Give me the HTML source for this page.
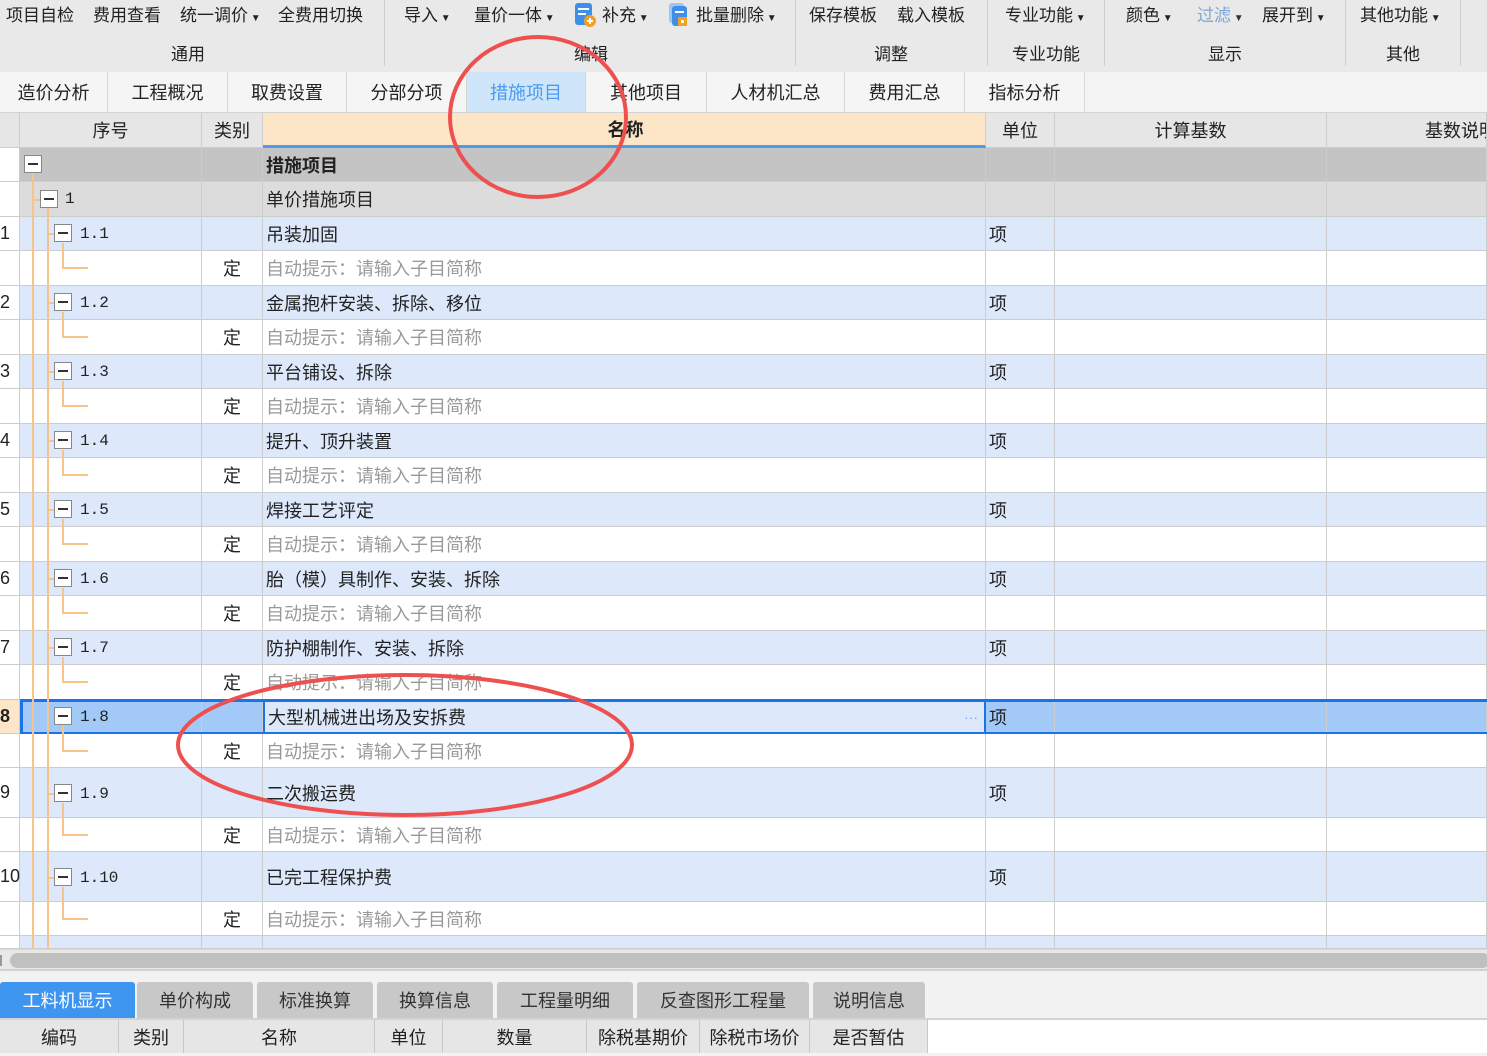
<!DOCTYPE html>
<html><head><meta charset="utf-8"><style>
*{margin:0;padding:0;box-sizing:border-box}
body{width:1487px;height:1053px;overflow:hidden;background:#f2f2f2;font-family:"Liberation Sans","Noto Sans CJK SC",sans-serif;color:#222;position:relative}
.a{position:absolute;white-space:nowrap}
.tb{left:0;top:0;width:1487px;height:72px;background:#e9e9e9}
.t1{font-size:17px;top:1px}
.t2{font-size:17px;top:40px}
.sep{position:absolute;top:0;width:1px;height:66px;background:#cfcfcf}
.tabs{left:0;top:72px;width:1487px;height:41px;background:#f3f3f3;border-bottom:1px solid #d4d4d4}
.tab{position:absolute;top:0;height:40px;line-height:42px;text-align:center;font-size:18px;border-right:1px solid #d6d6d6;background:#f5f5f5}
.row{position:absolute;left:0;width:1487px}
.row>div{position:absolute;top:0;height:100%;border-right:1px solid #cdcdcd;border-bottom:1px solid #cdcdcd;font-size:18px;white-space:nowrap;overflow:hidden;display:flex;align-items:center}
.c0{left:0;width:20px;background:#fff}
.c1{left:20px;width:182px}
.c2{left:202px;width:61px;justify-content:center}
.c3{left:263px;width:723px;padding-left:3px}
.c4{left:986px;width:69px;padding-left:3px}
.c5{left:1055px;width:272px}
.c6{left:1327px;width:160px}
.b>div{background:#dde9fb}
.w>div{background:#fff}
.b>.c0,.w>.c0{background:#fff}
.hint{color:#999}
.box{position:absolute;width:18px;height:18px;border:1px solid #888;background:#fff}
.box:after{content:"";position:absolute;left:3px;top:7px;width:10px;height:2px;background:#333}
.num{position:absolute;font-size:16px;font-family:"Liberation Mono","DejaVu Sans Mono",monospace}
.ov{position:absolute;background:#f6c38a}
.btab{position:absolute;top:982px;height:36px;line-height:38px;text-align:center;font-size:18px;background:#c8c8c8;color:#333;border-radius:3px 3px 0 0}
.bh{position:absolute;top:1020px;height:33px;line-height:36px;text-align:center;font-size:18px;background:#e6e6e6;border-right:1px solid #c8c8c8}
</style></head><body>

<div class="a tb"></div>
<div class="a t1" style="left:6px">项目自检</div>
<div class="a t1" style="left:93px">费用查看</div>
<div class="a t1" style="left:180px">统一调价<span style="font-size:10px"> ▼</span></div>
<div class="a t1" style="left:278px">全费用切换</div>
<div class="a t1" style="left:404px">导入<span style="font-size:10px"> ▼</span></div>
<div class="a t1" style="left:474px">量价一体<span style="font-size:10px"> ▼</span></div>
<svg class="a" style="left:574px;top:2px" width="24" height="26"><rect x="1" y="1" width="17" height="22" rx="3" fill="#3f8fe8"/><rect x="4" y="6" width="11" height="2" fill="#fff"/><rect x="4" y="11" width="8" height="2" fill="#fff"/><circle cx="16" cy="19" r="6" fill="#f5a020"/><path d="M13 19h6M16 16v6" stroke="#fff" stroke-width="2"/></svg>
<div class="a t1" style="left:602px">补充<span style="font-size:10px"> ▼</span></div>
<svg class="a" style="left:668px;top:2px" width="24" height="26"><rect x="1" y="1" width="15" height="20" rx="3" fill="#9cc6f3"/><rect x="4" y="4" width="15" height="20" rx="3" fill="#3f8fe8"/><rect x="7" y="9" width="9" height="2" fill="#fff"/><rect x="10" y="15" width="9" height="9" rx="1" fill="#f5a020"/><rect x="13" y="18" width="3" height="3" fill="#fff"/></svg>
<div class="a t1" style="left:696px">批量删除<span style="font-size:10px"> ▼</span></div>
<div class="a t1" style="left:809px">保存模板</div>
<div class="a t1" style="left:897px">载入模板</div>
<div class="a t1" style="left:1005px">专业功能<span style="font-size:10px"> ▼</span></div>
<div class="a t1" style="left:1126px">颜色<span style="font-size:10px"> ▼</span></div>
<div class="a t1" style="left:1197px;color:#7fa6d8">过滤<span style="font-size:10px;color:#333"> ▼</span></div>
<div class="a t1" style="left:1262px">展开到<span style="font-size:10px"> ▼</span></div>
<div class="a t1" style="left:1360px">其他功能<span style="font-size:10px"> ▼</span></div>
<div class="a t2" style="left:171px">通用</div>
<div class="a t2" style="left:574px">编辑</div>
<div class="a t2" style="left:874px">调整</div>
<div class="a t2" style="left:1012px">专业功能</div>
<div class="a t2" style="left:1208px">显示</div>
<div class="a t2" style="left:1386px">其他</div>
<div class="sep" style="left:384px"></div><div class="sep" style="left:795px"></div><div class="sep" style="left:987px"></div><div class="sep" style="left:1104px"></div><div class="sep" style="left:1345px"></div><div class="sep" style="left:1460px"></div>

<div class="a tabs"></div>
<div class="tab" style="left:0;top:72px;width:108px">造价分析</div>
<div class="tab" style="left:108px;top:72px;width:120px">工程概况</div>
<div class="tab" style="left:228px;top:72px;width:119px">取费设置</div>
<div class="tab" style="left:347px;top:72px;width:120px">分部分项</div>
<div class="tab" style="left:467px;top:72px;width:119px;background:#cfe5fa;color:#4a9bf0">措施项目</div>
<div class="tab" style="left:586px;top:72px;width:121px">其他项目</div>
<div class="tab" style="left:707px;top:72px;width:138px">人材机汇总</div>
<div class="tab" style="left:845px;top:72px;width:120px">费用汇总</div>
<div class="tab" style="left:965px;top:72px;width:120px">指标分析</div>

<div class="row" style="top:113px;height:35px">
<div class="c0" style="background:#e6e6e6"></div>
<div class="c1" style="background:#e6e6e6;justify-content:center">序号</div>
<div class="c2" style="background:#e6e6e6">类别</div>
<div class="c3" style="background:#fde6c8;justify-content:center;font-weight:bold;border-bottom:3px solid #4a9bf0">名称</div>
<div class="c4" style="background:#e6e6e6;justify-content:center;padding:0">单位</div>
<div class="c5" style="background:#e6e6e6;justify-content:center">计算基数</div>
<div class="c6" style="background:#e6e6e6;padding-left:98px">基数说明</div>
</div>

<div class="row" style="top:148px;height:34px"><div class="c0"></div><div class="c1" style="background:#c4c4c4"></div><div class="c2" style="background:#c4c4c4"></div><div class="c3" style="background:#c4c4c4;font-weight:bold">措施项目</div><div class="c4" style="background:#c4c4c4"></div><div class="c5" style="background:#c4c4c4"></div><div class="c6" style="background:#c4c4c4"></div></div>
<div class="row" style="top:182px;height:35px"><div class="c0"></div><div class="c1" style="background:#dcdcdc"></div><div class="c2" style="background:#dcdcdc"></div><div class="c3" style="background:#dcdcdc">单价措施项目</div><div class="c4" style="background:#dcdcdc"></div><div class="c5" style="background:#dcdcdc"></div><div class="c6" style="background:#dcdcdc"></div></div>

<div class="row b" style="top:217px;height:34px"><div class="c0">1</div><div class="c1"></div><div class="c2"></div><div class="c3">吊装加固</div><div class="c4">项</div><div class="c5"></div><div class="c6"></div></div>
<div class="row w" style="top:251px;height:35px"><div class="c0"></div><div class="c1"></div><div class="c2">定</div><div class="c3 hint">自动提示：请输入子目简称</div><div class="c4"></div><div class="c5"></div><div class="c6"></div></div>
<div class="row b" style="top:286px;height:34px"><div class="c0">2</div><div class="c1"></div><div class="c2"></div><div class="c3">金属抱杆安装、拆除、移位</div><div class="c4">项</div><div class="c5"></div><div class="c6"></div></div>
<div class="row w" style="top:320px;height:35px"><div class="c0"></div><div class="c1"></div><div class="c2">定</div><div class="c3 hint">自动提示：请输入子目简称</div><div class="c4"></div><div class="c5"></div><div class="c6"></div></div>
<div class="row b" style="top:355px;height:34px"><div class="c0">3</div><div class="c1"></div><div class="c2"></div><div class="c3">平台铺设、拆除</div><div class="c4">项</div><div class="c5"></div><div class="c6"></div></div>
<div class="row w" style="top:389px;height:35px"><div class="c0"></div><div class="c1"></div><div class="c2">定</div><div class="c3 hint">自动提示：请输入子目简称</div><div class="c4"></div><div class="c5"></div><div class="c6"></div></div>
<div class="row b" style="top:424px;height:34px"><div class="c0">4</div><div class="c1"></div><div class="c2"></div><div class="c3">提升、顶升装置</div><div class="c4">项</div><div class="c5"></div><div class="c6"></div></div>
<div class="row w" style="top:458px;height:35px"><div class="c0"></div><div class="c1"></div><div class="c2">定</div><div class="c3 hint">自动提示：请输入子目简称</div><div class="c4"></div><div class="c5"></div><div class="c6"></div></div>
<div class="row b" style="top:493px;height:34px"><div class="c0">5</div><div class="c1"></div><div class="c2"></div><div class="c3">焊接工艺评定</div><div class="c4">项</div><div class="c5"></div><div class="c6"></div></div>
<div class="row w" style="top:527px;height:35px"><div class="c0"></div><div class="c1"></div><div class="c2">定</div><div class="c3 hint">自动提示：请输入子目简称</div><div class="c4"></div><div class="c5"></div><div class="c6"></div></div>
<div class="row b" style="top:562px;height:34px"><div class="c0">6</div><div class="c1"></div><div class="c2"></div><div class="c3">胎（模）具制作、安装、拆除</div><div class="c4">项</div><div class="c5"></div><div class="c6"></div></div>
<div class="row w" style="top:596px;height:35px"><div class="c0"></div><div class="c1"></div><div class="c2">定</div><div class="c3 hint">自动提示：请输入子目简称</div><div class="c4"></div><div class="c5"></div><div class="c6"></div></div>
<div class="row b" style="top:631px;height:34px"><div class="c0">7</div><div class="c1"></div><div class="c2"></div><div class="c3">防护棚制作、安装、拆除</div><div class="c4">项</div><div class="c5"></div><div class="c6"></div></div>
<div class="row w" style="top:665px;height:35px"><div class="c0"></div><div class="c1"></div><div class="c2">定</div><div class="c3 hint">自动提示：请输入子目简称</div><div class="c4"></div><div class="c5"></div><div class="c6"></div></div>
<div class="row" style="top:700px;height:34px"><div class="c0" style="background:#fde6c8;font-weight:bold">8</div><div class="c1" style="background:#a3c9f9"></div><div class="c2" style="background:#a3c9f9"></div><div class="c3" style="background:#dde9fb;border:2px solid #1a73e8">大型机械进出场及安拆费<span style="position:absolute;right:6px;color:#6aa8e8;font-size:14px">···</span></div><div class="c4" style="background:#a3c9f9">项</div><div class="c5" style="background:#a3c9f9"></div><div class="c6" style="background:#a3c9f9"></div></div>
<div class="a" style="left:20px;top:699px;width:1467px;height:36px;border:3px solid #1a73e8;border-right:none"></div>
<div class="row w" style="top:734px;height:34px"><div class="c0"></div><div class="c1"></div><div class="c2">定</div><div class="c3 hint">自动提示：请输入子目简称</div><div class="c4"></div><div class="c5"></div><div class="c6"></div></div>
<div class="row b" style="top:768px;height:50px"><div class="c0">9</div><div class="c1"></div><div class="c2"></div><div class="c3">二次搬运费</div><div class="c4">项</div><div class="c5"></div><div class="c6"></div></div>
<div class="row w" style="top:818px;height:34px"><div class="c0"></div><div class="c1"></div><div class="c2">定</div><div class="c3 hint">自动提示：请输入子目简称</div><div class="c4"></div><div class="c5"></div><div class="c6"></div></div>
<div class="row b" style="top:852px;height:50px"><div class="c0" style="overflow:visible">10</div><div class="c1"></div><div class="c2"></div><div class="c3">已完工程保护费</div><div class="c4">项</div><div class="c5"></div><div class="c6"></div></div>
<div class="row w" style="top:902px;height:34px"><div class="c0"></div><div class="c1"></div><div class="c2">定</div><div class="c3 hint">自动提示：请输入子目简称</div><div class="c4"></div><div class="c5"></div><div class="c6"></div></div>
<div class="row b" style="top:936px;height:13px"><div class="c0"></div><div class="c1"></div><div class="c2"></div><div class="c3"></div><div class="c4"></div><div class="c5"></div><div class="c6"></div></div>

<!-- tree lines -->
<div class="ov" style="left:32px;top:173px;width:2px;height:776px"></div>
<div class="ov" style="left:47px;top:208px;width:2px;height:741px"></div>
<div class="ov" style="left:33px;top:199px;width:7px;height:2px"></div>
<div class="box" style="left:24px;top:155px"></div>
<div class="box" style="left:40px;top:190px"></div><div class="num" style="left:65px;top:190px">1</div>

<div class="ov" style="left:48px;top:233px;width:6px;height:2px"></div><div class="ov" style="left:62px;top:243px;width:2px;height:25px"></div><div class="ov" style="left:62px;top:267px;width:26px;height:2px"></div><div class="box" style="left:54px;top:224px"></div><div class="num" style="left:80px;top:225px">1.1</div>
<div class="ov" style="left:48px;top:302px;width:6px;height:2px"></div><div class="ov" style="left:62px;top:312px;width:2px;height:25px"></div><div class="ov" style="left:62px;top:336px;width:26px;height:2px"></div><div class="box" style="left:54px;top:293px"></div><div class="num" style="left:80px;top:294px">1.2</div>
<div class="ov" style="left:48px;top:371px;width:6px;height:2px"></div><div class="ov" style="left:62px;top:381px;width:2px;height:25px"></div><div class="ov" style="left:62px;top:405px;width:26px;height:2px"></div><div class="box" style="left:54px;top:362px"></div><div class="num" style="left:80px;top:363px">1.3</div>
<div class="ov" style="left:48px;top:440px;width:6px;height:2px"></div><div class="ov" style="left:62px;top:450px;width:2px;height:25px"></div><div class="ov" style="left:62px;top:474px;width:26px;height:2px"></div><div class="box" style="left:54px;top:431px"></div><div class="num" style="left:80px;top:432px">1.4</div>
<div class="ov" style="left:48px;top:509px;width:6px;height:2px"></div><div class="ov" style="left:62px;top:519px;width:2px;height:25px"></div><div class="ov" style="left:62px;top:543px;width:26px;height:2px"></div><div class="box" style="left:54px;top:500px"></div><div class="num" style="left:80px;top:501px">1.5</div>
<div class="ov" style="left:48px;top:578px;width:6px;height:2px"></div><div class="ov" style="left:62px;top:588px;width:2px;height:25px"></div><div class="ov" style="left:62px;top:612px;width:26px;height:2px"></div><div class="box" style="left:54px;top:569px"></div><div class="num" style="left:80px;top:570px">1.6</div>
<div class="ov" style="left:48px;top:647px;width:6px;height:2px"></div><div class="ov" style="left:62px;top:657px;width:2px;height:25px"></div><div class="ov" style="left:62px;top:681px;width:26px;height:2px"></div><div class="box" style="left:54px;top:638px"></div><div class="num" style="left:80px;top:639px">1.7</div>
<div class="ov" style="left:62px;top:726px;width:2px;height:25px"></div><div class="ov" style="left:62px;top:750px;width:26px;height:2px"></div><div class="box" style="left:54px;top:707px"></div><div class="num" style="left:80px;top:708px">1.8</div>
<div class="ov" style="left:48px;top:793px;width:6px;height:2px"></div><div class="ov" style="left:62px;top:803px;width:2px;height:32px"></div><div class="ov" style="left:62px;top:834px;width:26px;height:2px"></div><div class="box" style="left:54px;top:784px"></div><div class="num" style="left:80px;top:785px">1.9</div>
<div class="ov" style="left:48px;top:877px;width:6px;height:2px"></div><div class="ov" style="left:62px;top:887px;width:2px;height:32px"></div><div class="ov" style="left:62px;top:918px;width:26px;height:2px"></div><div class="box" style="left:54px;top:868px"></div><div class="num" style="left:80px;top:869px">1.10</div>

<!-- scrollbar -->
<div class="a" style="left:0;top:949px;width:1487px;height:22px;background:#e8e8e8;border-top:1px solid #d8d8d8;border-bottom:2px solid #d0d0d0"></div>
<div class="a" style="left:10px;top:953px;width:1480px;height:15px;background:#c0c0c0;border-radius:8px"></div>
<div class="a" style="left:0;top:955px;width:2px;height:11px;background:#999"></div>

<div class="btab" style="left:0;width:135px;background:#3d95f0;color:#fff">工料机显示</div>
<div class="btab" style="left:137px;width:116px">单价构成</div>
<div class="btab" style="left:257px;width:116px">标准换算</div>
<div class="btab" style="left:377px;width:116px">换算信息</div>
<div class="btab" style="left:497px;width:136px">工程量明细</div>
<div class="btab" style="left:637px;width:172px">反查图形工程量</div>
<div class="btab" style="left:813px;width:112px">说明信息</div>
<div class="a" style="left:0;top:1018px;width:1487px;height:2px;background:#d4d4d4"></div>
<div class="a" style="left:928px;top:1020px;width:559px;height:33px;background:#fff"></div>
<div class="bh" style="left:0;width:119px">编码</div>
<div class="bh" style="left:119px;width:65px">类别</div>
<div class="bh" style="left:184px;width:191px">名称</div>
<div class="bh" style="left:375px;width:68px">单位</div>
<div class="bh" style="left:443px;width:144px">数量</div>
<div class="bh" style="left:587px;width:113px">除税基期价</div>
<div class="bh" style="left:700px;width:110px">除税市场价</div>
<div class="bh" style="left:810px;width:118px">是否暂估</div>

<svg class="a" style="left:0;top:0" width="1487" height="1053">
<ellipse cx="538" cy="117" rx="88" ry="80" fill="none" stroke="#ee5050" stroke-width="4"/>
<ellipse cx="405" cy="745" rx="227" ry="70" fill="none" stroke="#ee5050" stroke-width="4"/>
</svg>
</body></html>
